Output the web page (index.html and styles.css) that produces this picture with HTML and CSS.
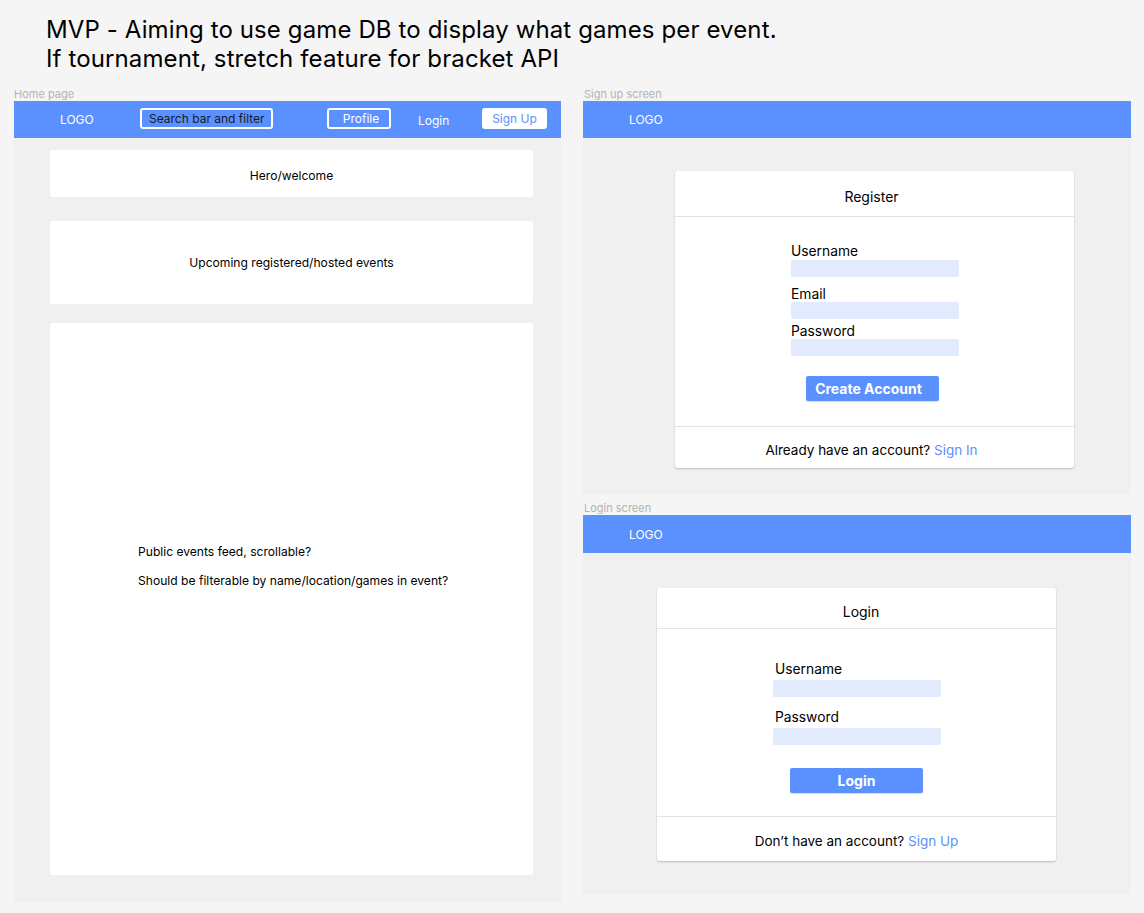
FILE: index.html
```html
<!DOCTYPE html>
<html>
<head>
<meta charset="utf-8">
<link rel="stylesheet" href="styles.css">
</head>
<body>
<div class="note">
  <div>MVP - Aiming to use game DB to display what games per event.</div>
  <div>If tournament, stretch feature for bracket API</div>
</div>
<div class="board">
  <section class="col col-left">
    <div class="frame-label">Home page</div>
    <div class="frame home">
      <nav class="nav">
        <span class="logo">LOGO</span>
        <span class="search">Search bar and filter</span>
        <span class="profile">Profile</span>
        <span class="nav-login">Login</span>
        <span class="signup-btn">Sign Up</span>
      </nav>
      <div class="hcard hero">Hero/welcome</div>
      <div class="hcard upcoming">Upcoming registered/hosted events</div>
      <div class="hcard feed">
        <p class="feed-line">Public events feed, scrollable?</p>
        <p class="feed-line second">Should be filterable by name/location/games in event?</p>
      </div>
    </div>
  </section>
  <section class="col col-right">
    <div class="frame-label">Sign up screen</div>
    <div class="frame signup">
      <nav class="nav"><span class="logo">LOGO</span></nav>
      <div class="card reg-card">
        <div class="card-head reg-head">Register</div>
        <div class="card-body reg-body">
          <div class="form">
            <label class="lbl">Username</label>
            <div class="input in-first"></div>
            <label class="lbl l-email">Email</label>
            <div class="input in-email"></div>
            <label class="lbl l-pass">Password</label>
            <div class="input in-first"></div>
            <div class="btn reg-btn">Create Account</div>
          </div>
        </div>
        <div class="card-foot reg-foot">Already have an account? <span class="link">Sign In</span></div>
      </div>
    </div>
    <div class="frame-label login-label">Login screen</div>
    <div class="frame login">
      <nav class="nav"><span class="logo">LOGO</span></nav>
      <div class="card log-card">
        <div class="card-head log-head">Login</div>
        <div class="card-body log-body">
          <div class="form">
            <label class="lbl ll">Username</label>
            <div class="input in-log"></div>
            <label class="lbl ll l-lpass">Password</label>
            <div class="input in-log"></div>
            <div class="btn log-btn">Login</div>
          </div>
        </div>
        <div class="card-foot log-foot">Don’t have an account? <span class="link">Sign Up</span></div>
      </div>
    </div>
  </section>
</div>
</body>
</html>
```

FILE: styles.css
```css
* { box-sizing: border-box; }
html, body { margin: 0; padding: 0; }
body {
  background: #f5f5f5;
  font-family: Inter, "Noto Sans", sans-serif;
  color: #000;
  width: 1144px;
  height: 913px;
  overflow: hidden;
}
.note {
  padding: 15px 0 0 46px;
  font-size: 24px;
  line-height: 29px;
  color: #000;
  letter-spacing: 0.12px;
}
.board {
  display: flex;
  gap: 22px;
  padding-left: 14px;
  margin-top: 14px;
}
.col { display: flex; flex-direction: column; }
.col-left { width: 547px; }
.col-right { width: 548px; }
.frame-label {
  height: 14px;
  font-size: 11px;
  line-height: 14px;
  color: #b3b3b3;
  padding-left: 1px;
}
.col-left .frame-label { padding-left: 0; }
.login-label { margin-top: 6px; }
.frame { background: #f0f0f0; }
.home { height: 802px; }
.signup { height: 394px; }
.login { height: 380px; }
.nav {
  height: 37px;
  background: #5b91ff;
  display: flex;
  align-items: center;
  padding-left: 46px;
  color: #fff;
  font-size: 12px;
}
.login .nav { height: 38px; }
.logo { width: 34px; line-height: 15px; }
.search {
  margin-left: 46px;
  width: 133px;
  height: 21px;
  border: 2px solid #fff;
  border-radius: 3px;
  color: #1a1a1a;
  font-size: 12px;
  line-height: 17px;
  padding-left: 7px;
  margin-top: -2px;
}
.profile {
  margin-left: 54px;
  width: 64px;
  height: 21px;
  border: 2px solid #fff;
  border-radius: 3px;
  text-align: center;
  line-height: 17px;
  margin-top: -2px;
  padding-left: 4px;
}
.nav-login { margin-left: 27px; width: 37px; line-height: 15px; margin-top: 2px; }
.signup-btn {
  margin-left: 27px;
  width: 65px;
  height: 21px;
  background: #fff;
  border-radius: 3px;
  color: #5b91ff;
  text-align: center;
  line-height: 21px;
  margin-top: -2px;
}
.hcard {
  background: #fff;
  border-radius: 2px;
  margin-left: 36px;
  width: 483px;
  font-size: 12.1px;
  line-height: 15px;
}
.hero {
  margin-top: 12px;
  height: 47px;
  display: flex;
  align-items: center;
  justify-content: center;
  padding-top: 4px;
}
.upcoming {
  margin-top: 24px;
  height: 83px;
  display: flex;
  align-items: center;
  justify-content: center;
}
.feed {
  margin-top: 19px;
  height: 552px;
  padding: 221px 0 0 88px;
}
.feed-line { margin: 0; line-height: 15px; }
.feed-line.second { margin-top: 14px; }

.card {
  background: #fff;
  border-radius: 3px;
  width: 399px;
  box-shadow: 0 1px 2px rgba(0,0,0,0.22);
}
.reg-card { margin: 33px 0 0 92px; }
.log-card { margin: 35px 0 0 74px; }
.card-head {
  text-align: center;
  font-size: 14px;
  line-height: 17px;
  border-bottom: 1px solid #e3e3e3;
}
.reg-head { height: 46px; padding-top: 17px; padding-right: 6px; }
.log-head { height: 41px; padding-top: 15px; padding-left: 9px; }
.card-body { padding-left: 116px; }
.reg-body { padding-top: 25px; padding-bottom: 25px; border-bottom: 1px solid #e3e3e3; }
.log-body { padding-top: 31px; padding-bottom: 23px; border-bottom: 1px solid #e3e3e3; }
.form { display: flex; flex-direction: column; width: 168px; }
.lbl { font-size: 13.8px; line-height: 19px; height: 17px; }
.ll { padding-left: 2px; }
.input {
  background: #e1ebfd;
  height: 17px;
  border-radius: 2px;
}
.in-first { margin-top: 1px; }
.l-email { margin-top: 8px; }
.in-email { margin-top: 0; }
.l-pass { margin-top: 2px; line-height: 21px; }
.in-log { margin-top: 3px; }
.l-lpass { margin-top: 11px; }
.btn {
  background: #5b91ff;
  color: #fff;
  font-weight: 700;
  font-size: 14px;
  height: 25px;
  line-height: 25px;
  width: 133px;
  text-align: center;
  border-radius: 2px;
  box-shadow: 0 1px 1px rgba(0,0,0,0.15);
}
.reg-btn { margin: 20px 0 0 15px; padding-right: 8px; }
.log-btn { margin: 23px 0 0 17px; }
.card-foot {
  text-align: center;
  font-size: 13.5px;
  line-height: 17px;
}
.reg-foot { height: 41px; padding-top: 15px; padding-right: 6px; }
.log-foot { height: 44px; padding-top: 16px; }
.link { color: #5b91ff; }
```
